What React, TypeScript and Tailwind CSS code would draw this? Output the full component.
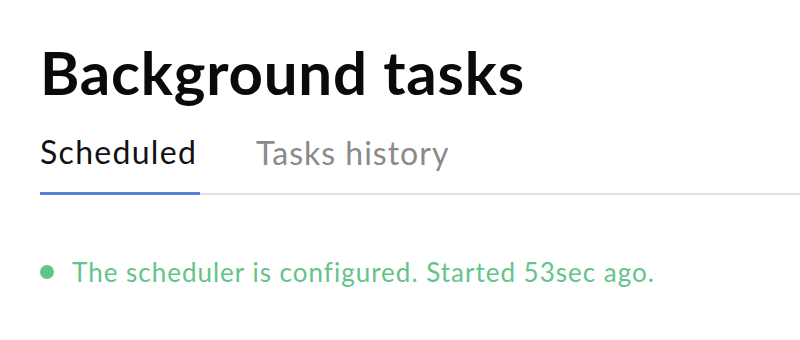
const App = () => {
  return (
    <div className="w-[800px] h-[340px] bg-white pl-[40px] pt-[36px] font-['Lato','Noto_Sans',sans-serif]">
      <h1 className="text-[60px] font-bold leading-[72px] text-[#0a0a0a] tracking-[0.8px]">
        Background tasks
      </h1>

      <div className="mt-[25px] flex items-end border-b-2 border-[#e2e2e2]">
        <div className="w-[160px] pb-[21px] border-b-[3px] border-[#5b7fd6] -mb-[2px] text-[32px] leading-[38px] tracking-[1.3px] text-[#111]">
          Scheduled
        </div>
        <div className="ml-[56px] pb-[21px] text-[32px] leading-[38px] tracking-[1px] text-[#8a8a8a]">
          Tasks history
        </div>
      </div>

      <div className="mt-[62px] flex items-center gap-[18px] text-[#63c48a]">
        <span className="w-[14px] h-[14px] rounded-full bg-[#63c48a] shrink-0" />
        <span className="text-[26px] leading-[30px] tracking-[1px]">
          The scheduler is configured. Started 53sec ago.
        </span>
      </div>
    </div>
  );
};

export default App;
